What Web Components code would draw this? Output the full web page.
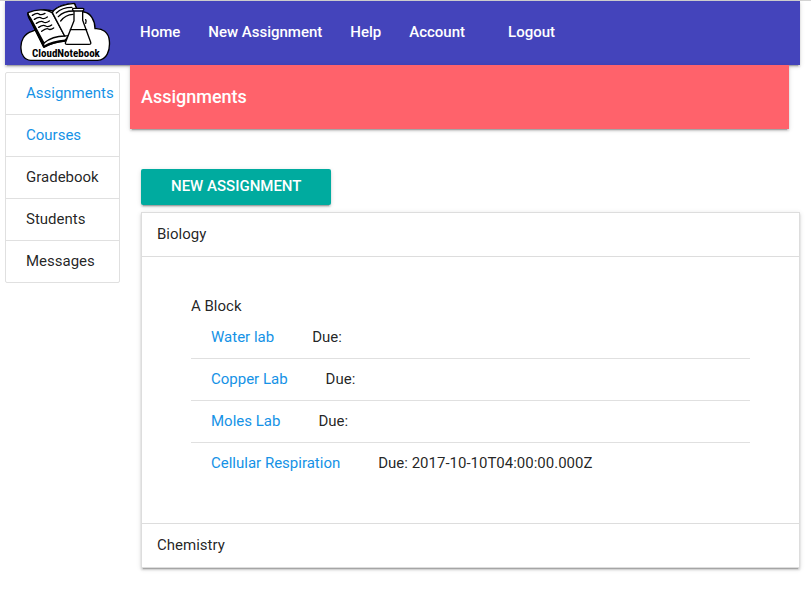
<!DOCTYPE html>
<html lang="en">
<head>
<meta charset="utf-8">
<meta name="viewport" content="width=device-width, initial-scale=1">
<title>CloudNotebook</title>
<style>
body {
  margin: 0;
  background: #fff;
  color: rgba(0,0,0,.87);
  font: 15px/22px Roboto, "Liberation Sans", sans-serif;
  --line: #e0e0e0;
  --link: #1592e6;
  --lift: 0 2px 2px 0 rgba(0,0,0,.14), 0 1px 5px 0 rgba(0,0,0,.12), 0 3px 1px -2px rgba(0,0,0,.2);
}
</style>
</head>
<body>
<notebook-app></notebook-app>
<script>
function define(name, html) {
  const template = document.createElement('template');
  template.innerHTML = html;
  customElements.define(name, class extends HTMLElement {
    constructor() {
      super();
      this.attachShadow({ mode: 'open' }).append(template.content.cloneNode(true));
    }
  });
}

define('cloud-logo', `
<style>
:host { display: block; line-height: 0; }
svg { width: 91px; height: 61px; display: block; }
text { font: bold 11px "Liberation Sans Narrow", "Roboto Condensed", "Liberation Sans", sans-serif; fill: #000; }
</style>
<svg viewBox="20 1 91 61" role="img" aria-label="CloudNotebook">
  <g transform="scale(.3333333)" stroke="#000" stroke-width="4" stroke-linejoin="round" stroke-linecap="round" fill="#fff">
    <path d="M92 178C74 177 63 161 63 143C61 120 72 98 96 91C107 85 118 85 128 88L194 42C199 33 212 29 225 30L252 33C272 36 285 58 285 83C307 81 326 94 328 119C331 149 320 177 293 178Z"/>
    <path d="M84 36C83 44 87 53 93 60L132 138C150 128 172 122 194 120L206 104L242 54L224 8C198 8 174 16 158 30C140 25 109 26 84 36Z"/>
    <path d="M84 38L90 56L130 136L132 124L93 50Z" fill="#000"/>
    <path d="M84 35C108 24 138 23 157 36L194 105C172 105 149 112 132 126L92 52C87 47 84 41 84 35Z"/>
    <path d="M157 35C166 19 194 9 223 7L242 53L204 104L194 105Z"/>
    <path d="M132 137C150 127 173 121 196 119" fill="none" stroke-width="7"/>
    <path d="M97 43Q111 34 117 39T135 37M103 55Q117 46 124 51T142 48M109 67Q123 58 130 63T148 60M116 79Q129 70 137 75T155 72M125 91Q139 80 145 84T161 81M169 36Q186 19 216 19M175 47Q191 30 220 30M182 60Q196 41 219 40" fill="none"/>
    <path d="M222 28H248V58L272 124Q274 130 267 130H201Q194 130 197 123L222 59Z"/>
    <path d="M218 27Q216 22 222 22H248Q253 22 251 27Q250 30 245 30H224Q219 30 218 27Z"/>
    <path d="M211 86H260" fill="none"/>
    <path d="M257 56Q260 61 257 67" fill="none"/>
  </g>
  <text x="32" y="56">CloudNotebook</text>
</svg>`);

define('nav-bar', `
<style>
:host { display: block; background: #4444bb; box-shadow: var(--lift); }
nav { display: flex; align-items: center; min-height: 64px; color: #fff; font-weight: 500; }
cloud-logo { margin: 0 15px 2px; }
::slotted(a) { padding: 0 14px 2px; color: inherit; text-decoration: none; white-space: nowrap; }
::slotted(a.apart) { margin-left: 15px; }
</style>
<nav><cloud-logo></cloud-logo><slot></slot></nav>`);

define('side-menu', `
<style>
:host { display: block; }
ul { list-style: none; margin: 0; padding: 0; border: 1px solid var(--line); border-radius: 2px; overflow: hidden; }
</style>
<ul><slot></slot></ul>`);

define('side-item', `
<style>
:host { display: block; border-bottom: 1px solid var(--line); }
:host(:last-of-type) { border-bottom: 0; }
li { display: block; padding: 9px 0 10px 20px; white-space: nowrap; }
::slotted(a) { color: var(--link); text-decoration: none; }
</style>
<li><slot></slot></li>`);

define('page-banner', `
<style>
:host { display: block; background: #ff626b; box-shadow: var(--lift); }
h1 { margin: 0; padding: 20px 11px; font-size: 18px; line-height: 24px; font-weight: 500; color: #fff; }
</style>
<h1><slot></slot></h1>`);

define('action-button', `
<style>
:host { display: block; }
button { border: 0; border-radius: 2px; padding: 0 30px 2px; height: 36px; background: #00ab9f; color: #fff; box-shadow: var(--lift);
  font: 500 15px/34px Roboto, "Liberation Sans", sans-serif; text-transform: uppercase; cursor: pointer; }
</style>
<button type="button"><slot></slot></button>`);

define('course-list', `
<style>
:host { display: block; border: 1px solid #ddd; border-bottom: 0; box-shadow: var(--lift); }
</style>
<slot></slot>`);

define('course-panel', `
<style>
:host { display: block; }
h2 { margin: 0; padding: 0 15px; font-size: 15px; font-weight: 400; line-height: 43px; border-bottom: 1px solid #ddd; }
.body { padding: 39px 49px; border-bottom: 1px solid #ddd; }
:host([closed]) .body { display: none; }
</style>
<h2><slot name="title"></slot></h2>
<div class="body"><slot></slot></div>`);

define('block-group', `
<style>
:host { display: block; }
h3 { margin: 0; font-size: 15px; line-height: 21px; font-weight: 400; }
ul { list-style: none; margin: 0; padding: 0; }
</style>
<h3><slot name="title"></slot></h3>
<ul><slot></slot></ul>`);

define('lab-row', `
<style>
:host { display: block; border-bottom: 1px solid var(--line); }
:host(:last-of-type) { border-bottom: 0; }
li { display: flex; gap: 38px; padding: 9px 20px 10px; }
::slotted(a) { color: var(--link); text-decoration: none; }
</style>
<li><slot name="lab"></slot><span>Due: <slot></slot></span></li>`);

define('notebook-app', `
<style>
:host { display: block; border-top: 1px solid #d3d3d3; padding: 0 11px 28px 5px; }
.columns { display: grid; grid-template-columns: 115px minmax(0, 1fr); column-gap: 10px; align-items: start; }
side-menu { margin-top: 7px; }
page-banner { margin-right: 11px; }
.content { padding: 40px 0 0 11px; }
action-button { margin-bottom: 7px; }
</style>
<nav-bar>
  <a href="#home">Home</a><a href="#new">New Assignment</a><a href="#help">Help</a><a href="#account">Account</a><a href="#logout" class="apart">Logout</a>
</nav-bar>
<div class="columns">
  <side-menu>
    <side-item><a href="#assignments">Assignments</a></side-item>
    <side-item><a href="#courses">Courses</a></side-item>
    <side-item>Gradebook</side-item>
    <side-item>Students</side-item>
    <side-item>Messages</side-item>
  </side-menu>
  <main>
    <page-banner>Assignments</page-banner>
    <div class="content">
      <action-button>New Assignment</action-button>
      <course-list>
        <course-panel>
          <span slot="title">Biology</span>
          <block-group>
            <span slot="title">A Block</span>
            <lab-row><a slot="lab" href="#water">Water lab</a></lab-row>
            <lab-row><a slot="lab" href="#copper">Copper Lab</a></lab-row>
            <lab-row><a slot="lab" href="#moles">Moles Lab</a></lab-row>
            <lab-row><a slot="lab" href="#cellular">Cellular Respiration</a>2017-10-10T04:00:00.000Z</lab-row>
          </block-group>
        </course-panel>
        <course-panel closed><span slot="title">Chemistry</span></course-panel>
      </course-list>
    </div>
  </main>
</div>`);
</script>
</body>
</html>
